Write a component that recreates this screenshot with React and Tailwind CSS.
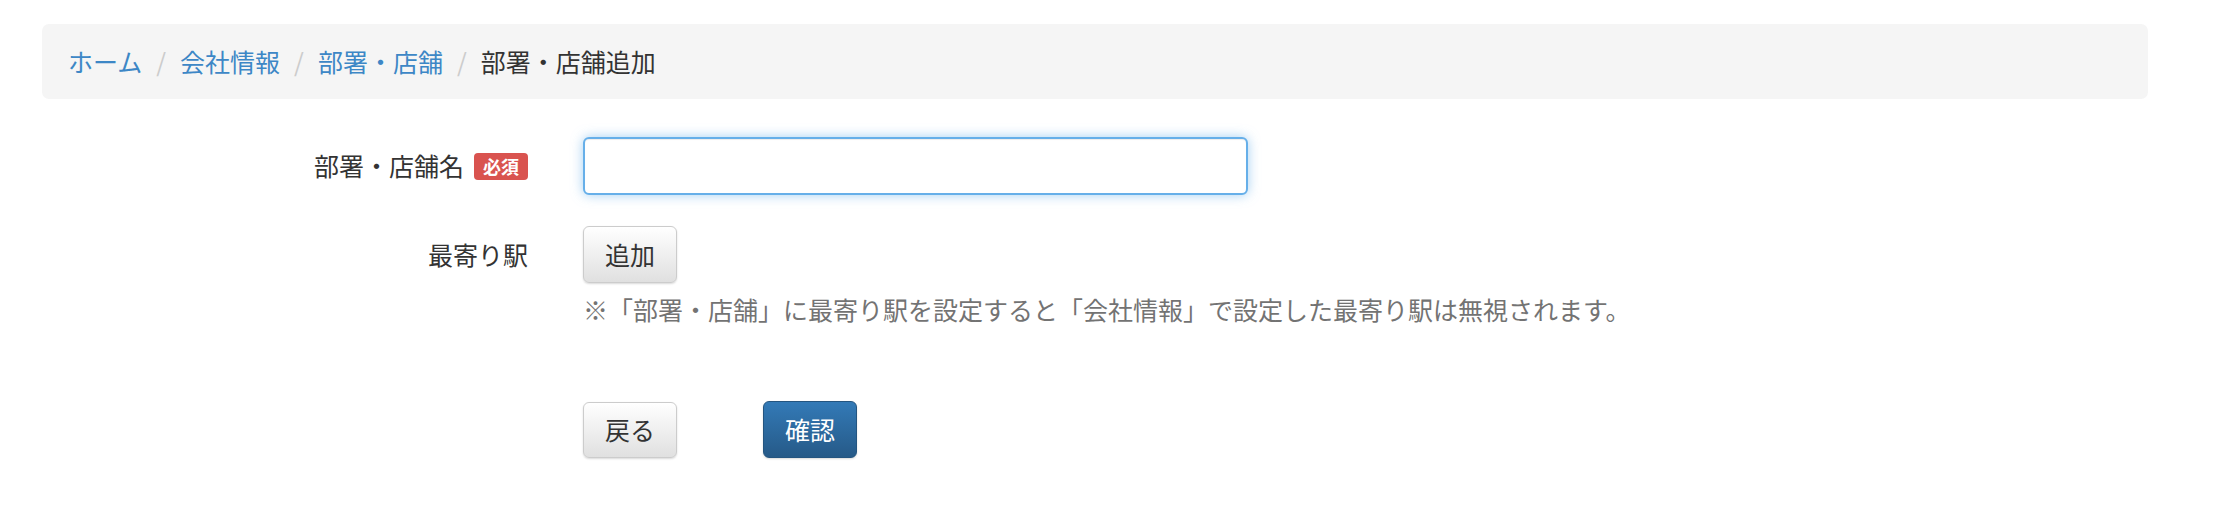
const font = { fontFamily: '"Noto Sans CJK JP", "Noto Sans", sans-serif' }

function Crumb({ children, last }) {
  return (
    <li className="flex items-center">
      {children}
      {!last && <span className="px-[14px] text-[#cccccc]">/</span>}
    </li>
  )
}

export default function App() {
  return (
    <div className="min-h-screen bg-white text-[25px] text-[#333333]" style={font}>
      <div className="pt-[24px] pl-[42px] pr-[66px]">
        <ol className="flex h-[75px] items-center rounded-[7px] bg-[#f5f5f5] px-[26px] leading-none">
          <Crumb><a className="text-[#3d87c6]">ホーム</a></Crumb>
          <Crumb><a className="text-[#3d87c6]">会社情報</a></Crumb>
          <Crumb><a className="text-[#3d87c6]">部署・店舗</a></Crumb>
          <Crumb last><span className="text-[#333333]">部署・店舗追加</span></Crumb>
        </ol>
      </div>

      <form className="pl-[42px]">
        <div className="mt-[38px] flex items-center">
          <label className="flex w-[486px] items-center justify-end">
            部署・店舗名
            <span className="ml-[10px] flex h-[27px] items-center rounded-[4px] bg-[#d9534f] px-[9px] text-[18px] font-bold leading-none text-white">
              必須
            </span>
          </label>
          <input
            type="text"
            className="ml-[55px] h-[58px] w-[665px] rounded-[6px] border-2 border-[#66afe9] bg-white px-[20px] outline-none shadow-[inset_0_1px_1px_rgba(0,0,0,0.075),0_0_12px_rgba(102,175,233,0.6)]"
          />
        </div>

        <div className="mt-[31px] flex items-center">
          <label className="w-[486px] text-right">最寄り駅</label>
          <button
            type="button"
            className="ml-[55px] h-[57px] w-[94px] rounded-[6px] border border-[#cccccc] bg-gradient-to-b from-white to-[#e0e0e0] leading-none text-[#333333] shadow-[0_1px_2px_rgba(0,0,0,0.15)]"
          >
            追加
          </button>
        </div>

        <p className="ml-[541px] mt-[8px] leading-[36px] text-[#737373]">
          ※「部署・店舗」に最寄り駅を設定すると「会社情報」で設定した最寄り駅は無視されます。
        </p>

        <div className="ml-[541px] mt-[74px] flex items-center gap-[86px]">
          <button
            type="button"
            className="h-[56px] w-[94px] rounded-[6px] border border-[#cccccc] bg-gradient-to-b from-white to-[#e0e0e0] leading-none text-[#333333] shadow-[0_1px_2px_rgba(0,0,0,0.15)]"
          >
            戻る
          </button>
          <button
            type="button"
            className="h-[57px] w-[94px] rounded-[6px] border border-[#245580] bg-gradient-to-b from-[#337ab7] to-[#265a88] leading-none text-white shadow-[0_1px_2px_rgba(0,0,0,0.15)]"
          >
            確認
          </button>
        </div>
      </form>
    </div>
  )
}
